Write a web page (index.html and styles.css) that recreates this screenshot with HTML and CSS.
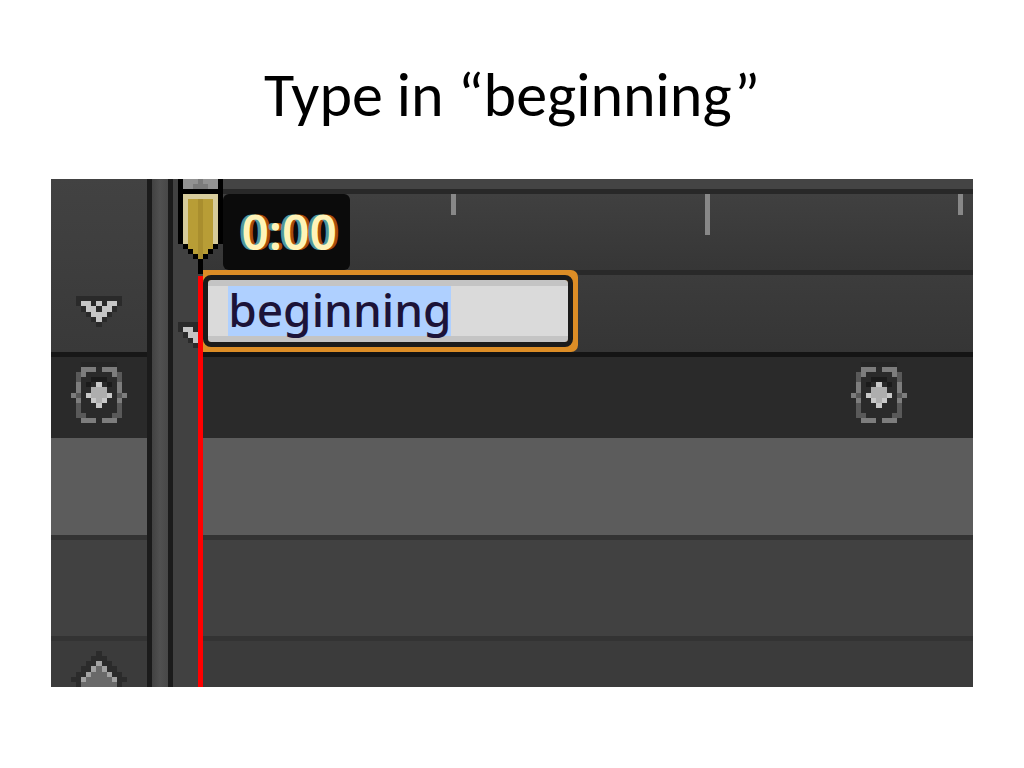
FILE: index.html
```html
<!DOCTYPE html>
<html lang="en">
<head>
    <meta charset="UTF-8">
    <meta name="viewport" content="width=device-width, initial-scale=1.0">
    <title>Type in “beginning”</title>
    <link rel="stylesheet" href="styles.css">
</head>
<body>
    <!-- shared icons, drawn on a pixel grid -->
    <svg class="symbols" aria-hidden="true">
        <symbol id="arrow-down" viewBox="0 0 9 6" preserveAspectRatio="none">
            <path fill="#2a2a2a" d="M0 0h9v2h-1v1h-1v1h-1v1h-1v1h-1v-1h-1v-1h-1v-1h-1v-1h-1z"/>
            <path fill="#c6c6c6" d="M1 1h2v1h1v1h1v-1h1v-1h2v1h-1v1h-1v1h-1v1h-1v-1h-1v-1h-1v-1h-1zM4 1h1v1h-1z"/>
        </symbol>
        <symbol id="keyframe" viewBox="0 0 11 12" preserveAspectRatio="none">
            <path fill="#262626" d="M2 0h7v1h-7z"/>
            <path fill="#1b1b1b" d="M4 3h3v1h1v1h-1v-1h-3v1h-1v-1h1z"/>
            <path fill="#595959" d="M1 2h1v9h-1zM9 2h1v9h-1zM2 10h1v1h-1zM8 10h1v1h-1z"/>
            <path fill="#7d7d7d" d="M2 1h3v1h-2v1h-1zM6 1h3v2h-1v-1h-2zM1 4h1v2h-1zM9 4h1v2h-1zM0 6h1v1h-1zM10 6h1v1h-1zM1 7h1v1h-1zM9 7h1v1h-1zM2 11h3v1h-3zM6 11h3v1h-3z"/>
            <path fill="#c8c8c8" d="M5 4h1v1h1v1h1v1h-1v1h-1v1h-1v-1h-1v-1h-1v-1h1v-1h1z"/>
            <path fill="#aeaeae" d="M4 5h3v2h-1v1h-1v-1h-1z"/>
        </symbol>
    </svg>

    <main class="slide">
        <h1>Type in “beginning”</h1>

        <div class="timeline">
            <div class="panel">
                <div class="row row-head">
                    <svg class="arrow"><use href="#arrow-down"/></svg>
                </div>
                <div class="row row-keys">
                    <svg class="key"><use href="#keyframe"/></svg>
                </div>
                <div class="row row-selected"></div>
                <div class="row row-layer"></div>
                <div class="row row-last">
                    <svg class="diamond" viewBox="0 0 11 7" preserveAspectRatio="none">
                        <path fill="#2b2b2b" d="M5 0h1v1h1v1h1v1h1v1h1v1h1v1h-1v1h-9v-1h-1v-1h1v-1h1v-1h1v-1h1v-1h1z"/>
                        <path fill="#696969" d="M5 3h1v1h1v1h1v1h1v1h-7v-1h1v-1h1v-1h1z"/>
                        <path fill="#a2a2a2" d="M5 2h1v1h1v1h1v1h1v1h-1v-1h-1v-1h-1v-1h-1v1h-1v1h-1v1h-1v-1h1v-1h1v-1h1z"/>
                    </svg>
                </div>
            </div>

            <div class="splitter"></div>

            <div class="gutter">
                <svg class="arrow"><use href="#arrow-down"/></svg>
            </div>

            <div class="tracks">
                <div class="strip"></div>
                <div class="ruler">
                    <span class="tick"></span>
                    <span class="tick tick-long"></span>
                    <span class="tick"></span>
                </div>
                <div class="row row-labels">
                    <div class="label-box">
                        <input type="text" value="beginning" aria-label="Label name">
                    </div>
                </div>
                <div class="row row-keys">
                    <svg class="key"><use href="#keyframe"/></svg>
                </div>
                <div class="row row-selected"></div>
                <div class="row row-layer"></div>
                <div class="row row-last"></div>
            </div>

            <div class="playhead">
                <svg class="marker" viewBox="0 0 9 19" shape-rendering="crispEdges">
                    <path fill="#000" d="M0 0h9v13h-1v1h-1v1h-1v1h-1v3h-1v-3h-1v-1h-1v-1h-1v-1h-1z"/>
                    <path fill="#929292" d="M1 0h7v2h-7z"/>
                    <path fill="#7b7b7b" d="M3 1h3v1h-3zM4 0h1v1h-1z"/>
                    <path fill="#d6cb9b" d="M1 3h7v10h-7z"/>
                    <path fill="#b89d36" d="M2 4h5v10h-1v1h-1v1h-1v-1h-1v-1h-1z"/>
                    <path fill="#a98e2e" d="M4 4h1v12h-1z"/>
                </svg>
                <span class="time">0:00</span>
            </div>
        </div>
    </main>
</body>
</html>
```
FILE: styles.css
```css
* {
    box-sizing: border-box;
}

body {
    margin: 0;
    background-color: #fff;
    font-family: "Noto Sans", sans-serif;
}

.symbols {
    position: absolute;
    width: 0;
    height: 0;
}

.slide {
    padding: 59px 5% 80px;
}

h1 {
    margin: 0 0 48px;
    font-family: Carlito, Lato, sans-serif;
    font-size: 62px;
    font-weight: normal;
    line-height: 72px;
    text-align: center;
    color: #000;
}

.timeline {
    position: relative;
    display: grid;
    grid-template-columns: 96px 26px 30px 1fr;
    overflow: hidden;
    background-color: #414141;
}

.timeline svg {
    display: block;
    shape-rendering: crispEdges;
}

/* rows, used by the left panel and by the tracks */
.row-head {
    height: 178px;
    padding: 117px 25px 0;
    background: linear-gradient(#424242, #393939);
    border-bottom: 5px solid #171717;
}

.row-keys {
    height: 81px;
    padding: 5px 20px;
    background-color: #2a2a2a;
}

.row-selected {
    height: 102px;
    background-color: #5c5c5c;
    border-bottom: 5px solid #333;
}

.row-layer {
    height: 101px;
    background-color: #414141;
    border-bottom: 5px solid #333;
}

.row-last {
    height: 46px;
    padding: 10px 20px 0;
    background-color: #3b3b3b;
}

.arrow {
    width: 46px;
    height: 31px;
}

.key {
    width: 56px;
    height: 61px;
}

.diamond {
    width: 56px;
    height: 36px;
}

.splitter {
    background: linear-gradient(to right, #424242, #505050 50%, #484848);
    border-left: 5px solid #1b1b1b;
    border-right: 5px solid #1b1b1b;
}

.gutter {
    padding: 143px 0 0 5px;
}

/* right side */
.tracks {
    min-width: 0;
}

.tracks .row-keys {
    display: flex;
    justify-content: flex-end;
    padding-right: 66px;
}

.strip {
    height: 15px;
    background-color: #444;
    border-bottom: 5px solid #282828;
}

.ruler {
    display: flex;
    height: 81px;
    padding-right: 10px;
    background: linear-gradient(#404040, #363636);
    border-bottom: 5px solid #292929;
}

.tick {
    flex: 1;
    height: 21px;
    border-right: 5px solid #888;
}

.tick-long {
    height: 41px;
}

.row-labels {
    display: flex;
    height: 82px;
    background: linear-gradient(#3c3c3c, #353535);
    border-bottom: 5px solid #141414;
}

.label-box {
    width: 375px;
    height: 82px;
    margin-top: -5px;
    padding: 5px 5px 5px 0;
    background-color: #dc8d26;
    border-radius: 0 7px 7px 0;
}

.label-box input {
    display: block;
    width: 100%;
    height: 100%;
    padding: 0 0 5px 20px;
    border: 5px solid #1b1b1b;
    border-radius: 8px;
    outline: none;
    background:
        linear-gradient(#afd0ff, #afd0ff) 20px 6px / 223px 50px no-repeat padding-box,
        linear-gradient(#c4c4c4 6px, #dadada 6px, #dadada 56px, #c4c4c4 56px) padding-box;
    color: #1c1338;
    font-family: "Noto Sans", sans-serif;
    font-size: 46px;
    font-weight: 500;
}

/* current time */
.playhead {
    position: absolute;
    top: 0;
    bottom: 0;
    left: 127px;
    width: 45px;
}

.playhead::after {
    content: "";
    position: absolute;
    top: 97px;
    bottom: 0;
    left: 20px;
    width: 5px;
    background-color: #f00;
}

.marker {
    width: 45px;
    height: 95px;
}

.time {
    position: absolute;
    top: 15px;
    left: 45px;
    width: 127px;
    height: 76px;
    padding-left: 5px;
    border-radius: 6px;
    background-color: #0b0b0b;
    color: #fff3b8;
    font-size: 48px;
    font-weight: 600;
    line-height: 76px;
    text-align: center;
    text-shadow: -3px 0 #4f969e, 3px 0 #a84e0c;
}
```
